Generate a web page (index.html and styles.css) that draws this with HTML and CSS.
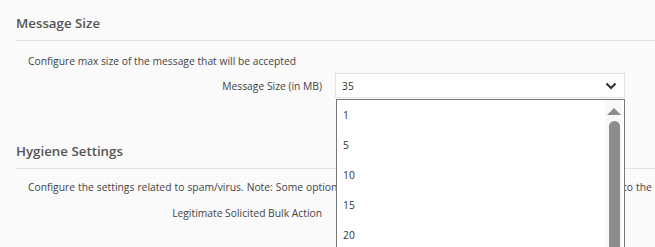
FILE: index.html
```html
<!DOCTYPE html>
<html>
<head>
<meta charset="utf-8">
<link rel="stylesheet" href="styles.css">
</head>
<body>
<div class="page">
  <section class="section first">
    <h2 class="section-title">Message Size</h2>
    <p class="desc">Configure max size of the message that will be accepted</p>
    <div class="row">
      <label class="row-label">Message Size (in MB)</label>
      <div class="select-wrap">
        <div class="select">
          <span>35</span>
          <svg class="chev" width="12" height="8" viewBox="0 0 12 8"><path d="M1.5 1.5 L6 6 L10.5 1.5" fill="none" stroke="#333" stroke-width="2.2"/></svg>
        </div>
        <div class="dropdown">
          <ul class="options">
            <li>1</li>
            <li>5</li>
            <li>10</li>
            <li>15</li>
            <li>20</li>
            <li>25</li>
          </ul>
          <div class="scrollbar">
            <div class="arrow"></div>
            <div class="thumb"></div>
          </div>
        </div>
      </div>
    </div>
  </section>
  <section class="section second">
    <h2 class="section-title">Hygiene Settings</h2>
    <p class="desc">Configure the settings related to spam/virus. Note: Some options may not be applicable depending on the settings applied to the domain</p>
    <div class="row">
      <label class="row-label">Legitimate Solicited Bulk Action</label>
      <div class="select-wrap"></div>
    </div>
  </section>
</div>
</body>
</html>
```
FILE: styles.css
```css
html, body {
  margin: 0;
  padding: 0;
  background: #fafafa;
  overflow: hidden;
}
body {
  font-family: "Open Sans", "Liberation Sans", sans-serif;
  color: #444;
  width: 655px;
  height: 247px;
}
.page {
  padding: 13px 0 0 15px;
}
.first {
  position: relative;
  z-index: 2;
}
.section-title {
  margin: 0;
  padding: 0 0 7px 1px;
  font-size: 13.3px;
  font-weight: 600;
  color: #555;
  line-height: 20px;
  border-bottom: 1px solid #e3e3e3;
}
.desc {
  margin: 12px 0 0 13px;
  font-size: 10.3px;
  line-height: 16px;
  white-space: nowrap;
}
.second .desc {
  margin-top: 10px;
  word-spacing: 0.4px;
}
.row {
  display: grid;
  grid-template-columns: 307px 290px;
  column-gap: 13px;
  align-items: center;
  margin-top: 4px;
}
.row-label {
  text-align: right;
  font-size: 10.3px;
  line-height: 16px;
}
.select-wrap {
  position: relative;
  height: 25px;
}
.select {
  box-sizing: border-box;
  height: 25px;
  background: #fff;
  border: 1px solid #e2e2e2;
  display: flex;
  align-items: center;
  justify-content: space-between;
  padding: 0 5px 0 6px;
  font-size: 10.3px;
  color: #333;
}
.chev {
  margin-right: 2px;
}
.dropdown {
  position: absolute;
  left: 1px;
  top: 26px;
  width: 289px;
  height: 200px;
  box-sizing: border-box;
  background: #fff;
  border: 1px solid #777;
  z-index: 5;
}
.options {
  list-style: none;
  margin: 0;
  padding: 0;
}
.options li {
  height: 30px;
  line-height: 30px;
  padding-left: 6px;
  font-size: 10.3px;
  color: #333;
}
.scrollbar {
  position: absolute;
  top: 0;
  right: 2px;
  width: 17px;
  bottom: 0;
  background: #f8f8f8;
}
.arrow {
  margin: 8px auto 0;
  width: 0;
  height: 0;
  border-left: 7px solid transparent;
  border-right: 7px solid transparent;
  border-bottom: 7px solid #8c8c8c;
}
.thumb {
  margin: 6px auto 0 4px;
  width: 11px;
  height: 200px;
  background: #8c8c8c;
  border-radius: 6px 6px 0 0;
}
.second {
  margin-top: 43px;
}
.second .row {
  margin-top: 5px;
}
```
